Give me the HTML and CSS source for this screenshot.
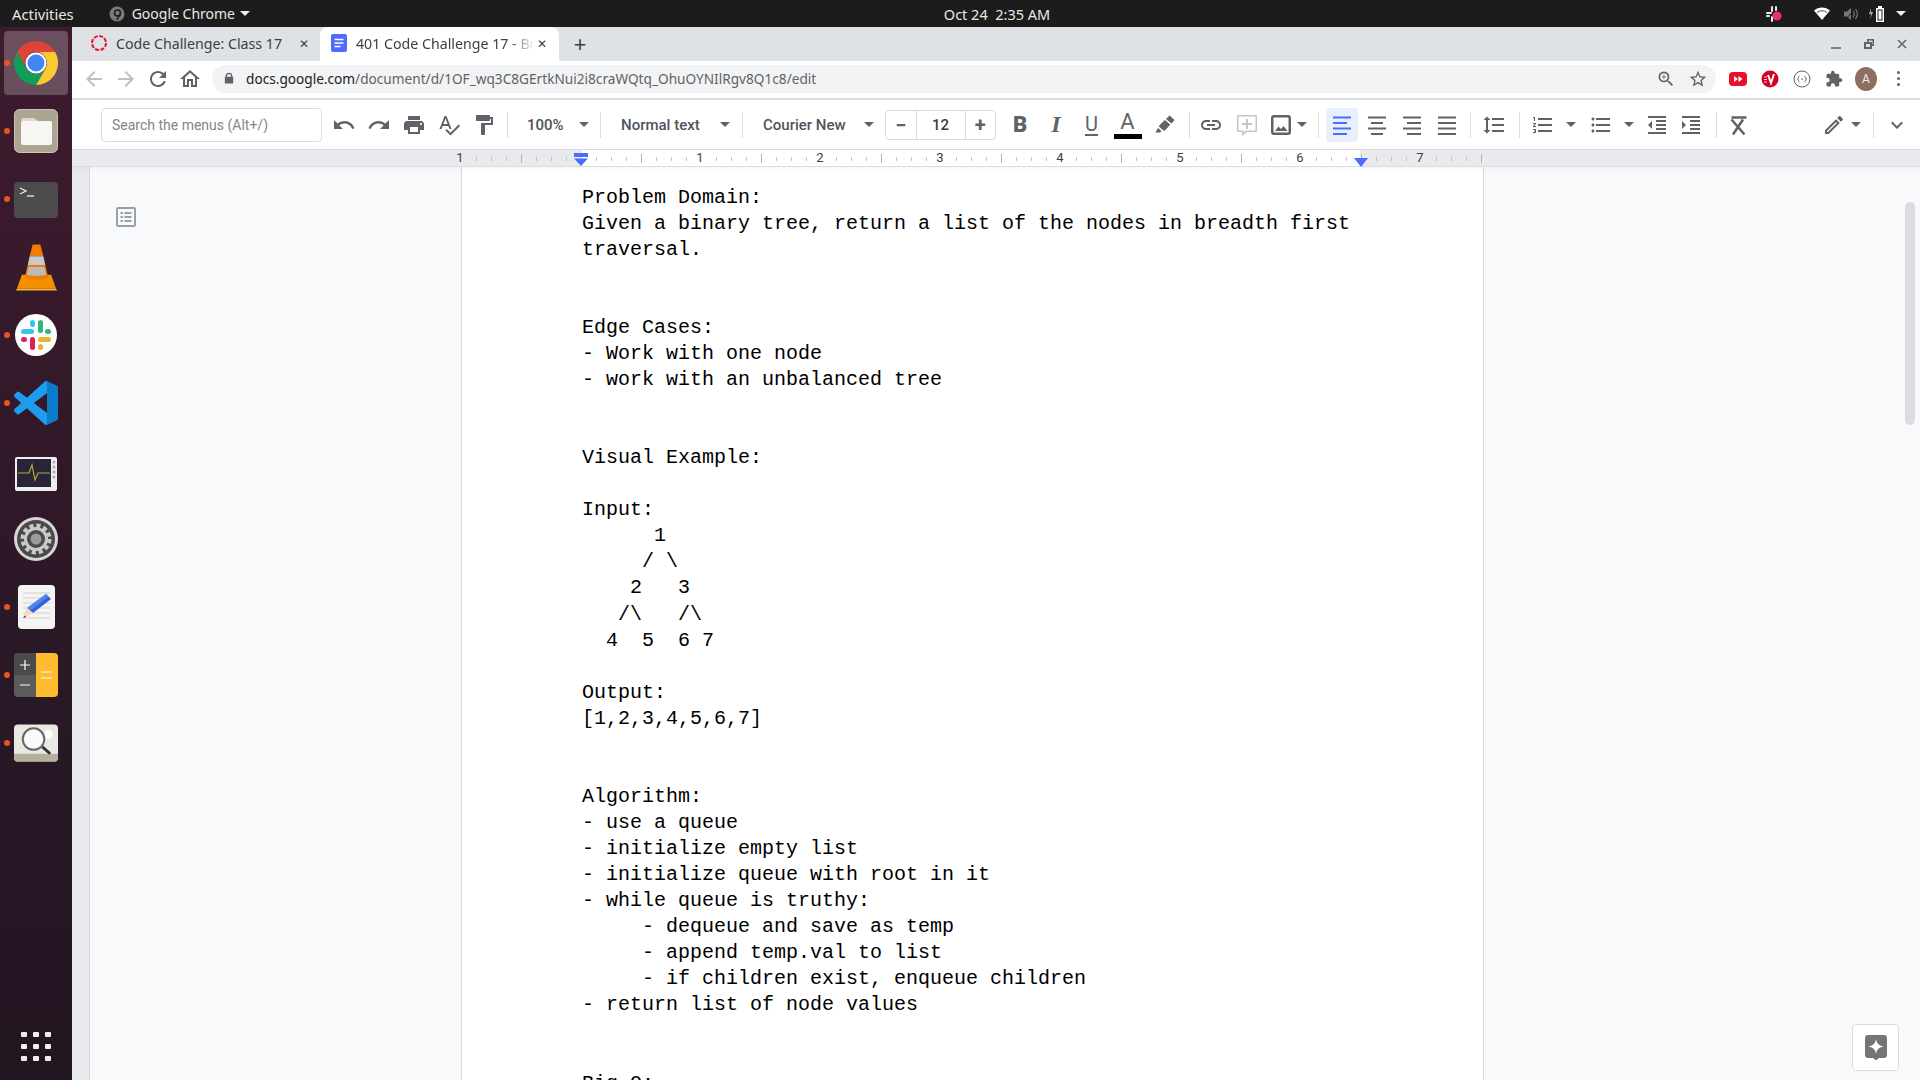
FILE: index.html
```html
<!DOCTYPE html>
<html lang="en">
<head>
  <meta charset="UTF-8">
  <title>401 Code Challenge 17</title>
  <link rel="stylesheet" href="styles.css">
</head>
<body>
  <!-- top bar -->
  <header class="topbar">
    <div class="topbar-left">
      <span class="activities">Activities</span>
      <span class="app-menu">
        <svg class="app-icon" viewBox="0 0 16 16"><circle cx="8" cy="8" r="7.5" fill="#7b7b7b"/><circle cx="8.5" cy="7" r="3" fill="none" stroke="#1c1c1c" stroke-width="1.6"/><path d="M11 8l-3 6" stroke="#1c1c1c" stroke-width="1.6"/></svg>
        Google Chrome <i class="caret white"></i>
      </span>
    </div>
    <div class="clock">Oct 24&nbsp;&nbsp;2:35 AM</div>
    <div class="tray">
      <svg class="tray-slack" viewBox="0 0 18 18"><g fill="#eee"><rect x="1" y="7" width="6" height="2" rx="1"/><rect x="6" y="1" width="2" height="6" rx="1"/><rect x="10" y="1" width="2" height="5" rx="1"/><rect x="6" y="11" width="2" height="6" rx="1"/><rect x="1" y="10" width="4" height="2" rx="1"/></g><circle cx="12" cy="11" r="4.6" fill="#e9306c"/></svg>
      <svg class="tray-wifi" viewBox="0 0 16 16"><path d="M0 4.5C4.500 .5 11.500 .5 16 4.500L8 14z" fill="#fff"/><path d="M3 6.500c3-2.200 7-2.200 10 0" fill="none" stroke="#1c1c1c" stroke-width=".8"/></svg>
      <svg class="tray-sound" viewBox="0 0 16 16"><path d="M1 5.500h3L8 2v12l-4-3.500H1z" fill="#777"/><path d="M10 4.500c1.500 2 1.500 5 0 7M12.500 3c2.200 3 2.200 7 0 10" fill="none" stroke="#777" stroke-width="1.200"/><path d="M2 14L13 2" stroke="#1c1c1c" stroke-width="1"/></svg>
      <svg class="tray-battery" viewBox="0 0 18 18"><path d="M3 3L1 9h2l-1 5 3-7H3z" fill="#aaa"/><path d="M10 1h4v2h2v14H8V3h2z" fill="#fff"/><rect x="9.500" y="4.500" width="5" height="11" fill="#1c1c1c"/><rect x="10.500" y="5.500" width="3" height="9" fill="#fff"/></svg>
      <i class="caret white"></i>
    </div>
  </header>

  <div class="desktop">
    <!-- dock -->
    <nav class="dock">
      <div class="dock-item active">
        <i class="run-dot"></i>
        <svg class="ic44" viewBox="2 2 44 44">
          <path d="M4.950 13A22 22 0 0 1 43.050 13H24A11 11 0 0 0 14.470 29.500z" fill="#db4437"/>
          <path d="M43.050 13A22 22 0 0 1 24 46L33.530 29.500A11 11 0 0 0 24 13z" fill="#fcc934"/>
          <path d="M24 46A22 22 0 0 1 4.950 13L14.470 29.500A11 11 0 0 0 33.530 29.500z" fill="#0f9d58"/>
          <circle cx="24" cy="24" r="10.500" fill="#fff"/><circle cx="24" cy="24" r="8.500" fill="#4285f4"/>
        </svg>
      </div>
      <div class="dock-item">
        <i class="run-dot"></i>
        <svg class="ic44" viewBox="0 0 44 44"><rect x=".5" y=".5" width="43" height="43" rx="5" fill="#aca591" stroke="#c8c3b4"/><path d="M7 12a3 3 0 0 1 3-3h10l4 3z" fill="#dcd8cc"/><rect x="7" y="12" width="31" height="24" rx="2" fill="#f8f6f2"/></svg>
      </div>
      <div class="dock-item">
        <i class="run-dot"></i>
        <svg class="ic44 term" viewBox="0 0 44 36"><rect width="44" height="36" rx="4" fill="#4c4c4c"/><path d="M6 6l6 3-6 3" fill="none" stroke="#eee" stroke-width="1.300"/><path d="M13 14h7" stroke="#eee" stroke-width="1.300"/></svg>
      </div>
      <div class="dock-item">
        <svg class="ic44 tall" viewBox="0 0 42 48">
          <path d="M6 32L1 46h40l-5-14z" fill="#f39000"/><path d="M1 46h40l1 2H0z" fill="#f8b133"/>
          <path d="M17 1h8l3 12H14z" fill="#f07d00"/><path d="M14 13h14l2 9H12z" fill="#c9c9c9"/><path d="M12 22h18l3 13c-4 3-20 3-24 0z" fill="#f07d00"/><path d="M13 24h16l2 8c-5 1.500-15 1.500-20 0z" fill="#bbb"/>
        </svg>
      </div>
      <div class="dock-item">
        <i class="run-dot"></i>
        <svg class="ic44" viewBox="0 0 44 44"><circle cx="22" cy="22" r="21" fill="#fff"/><g><rect x="7" y="16" width="13" height="5" rx="2.500" fill="#36c5f0"/><rect x="16" y="7" width="5" height="7" rx="2.500" fill="#36c5f0"/><rect x="24" y="7" width="5" height="13" rx="2.500" fill="#2eb67d"/><rect x="31" y="16" width="6" height="5" rx="2.500" fill="#2eb67d"/><rect x="24" y="24" width="13" height="5" rx="2.500" fill="#ecb22e"/><rect x="24" y="31" width="5" height="6" rx="2.500" fill="#ecb22e"/><rect x="16" y="24" width="5" height="13" rx="2.500" fill="#e01e5a"/><rect x="7" y="24" width="6" height="5" rx="2.500" fill="#e01e5a"/></g></svg>
      </div>
      <div class="dock-item">
        <i class="run-dot"></i>
        <svg class="ic44" viewBox="0 0 100 100"><path fill="#1f9cf0" d="M96.500 10.800L75.900.9a6.200 6.200 0 0 0-7.100 1.200L29.400 38 12.200 25a4.200 4.200 0 0 0-5.300.2l-5.500 5a4.200 4.200 0 0 0 0 6.200L16.300 50 1.400 63.600a4.200 4.200 0 0 0 0 6.200l5.500 5a4.200 4.200 0 0 0 5.300.2l17.200-13 39.400 35.900a6.200 6.200 0 0 0 7.100 1.200l20.600-9.900a6.200 6.200 0 0 0 3.500-5.600V16.400a6.200 6.200 0 0 0-3.500-5.600zM75 72.700L45.100 50 75 27.300z"/><path fill="#0a7ccb" d="M75.900.9l20.600 9.900a6.200 6.200 0 0 1 3.500 5.600v67.200a6.200 6.200 0 0 1-3.500 5.600l-20.600 9.900a6.200 6.200 0 0 1-4.900.3c1.200.6 4-1 4-3.400V4c0-2.400-2.800-4-4-3.400a6.200 6.200 0 0 1 4.900.3z"/></svg>
      </div>
      <div class="dock-item">
        <svg class="ic44 monitor" viewBox="0 0 42 34"><rect width="42" height="34" rx="2" fill="#eee"/><rect x="2" y="2" width="34" height="28" fill="#2a2438"/><path d="M3 16h11l3-8 3 15 3-7h12" fill="none" stroke="#b9a82e" stroke-width="1.200"/><g fill="#aaa"><circle cx="39" cy="5" r="1.500"/><circle cx="39" cy="10" r="1.500"/><circle cx="39" cy="15" r="1.500"/><circle cx="39" cy="20" r="1.500"/></g></svg>
      </div>
      <div class="dock-item">
        <svg class="ic44" viewBox="0 0 44 44"><circle cx="22" cy="22" r="22" fill="#d6d6d6"/><circle cx="22" cy="22" r="19" fill="#4a4a4a"/><circle cx="22" cy="22" r="13" fill="none" stroke="#c9c9c9" stroke-width="5" stroke-dasharray="4 2.800"/><circle cx="22" cy="22" r="10.500" fill="none" stroke="#c9c9c9" stroke-width="3"/><circle cx="22" cy="22" r="5.500" fill="#9a9a9a"/></svg>
      </div>
      <div class="dock-item">
        <i class="run-dot"></i>
        <svg class="ic44 narrow" viewBox="0 0 37 44"><rect width="37" height="44" rx="4" fill="#f4f4f4"/><g stroke="#cfcfcf"><path d="M5 8h27M5 13h27M5 18h27M5 23h27M5 28h27M5 33h27"/></g><path d="M28 9l5 5-18 14-6-5z" fill="#2f62d9"/><path d="M28 9l2.500 2.500-18 14-3-2.500z" fill="#4f86f0"/><path d="M9 23l6 5-10 5z" fill="#f8d8b8"/><path d="M7 30.500l-2 2.500 3-1z" fill="#333"/></svg>
      </div>
      <div class="dock-item">
        <i class="run-dot"></i>
        <svg class="ic44" viewBox="0 0 44 44"><path d="M4 0h18v44H4a4 4 0 0 1-4-4V4a4 4 0 0 1 4-4z" fill="#5b5b5b"/><path d="M4 0h18v22H0V4a4 4 0 0 1 4-4z" fill="#4a4a4a"/><path d="M22 0h18a4 4 0 0 1 4 4v36a4 4 0 0 1-4 4H22z" fill="#fdbb2d"/><path d="M6 12h10M11 7v10M6 32h10M27 19h11M27 25h11" stroke="#fff" stroke-width="1.200"/></svg>
      </div>
      <div class="dock-item">
        <i class="run-dot"></i>
        <svg class="ic44" viewBox="0 0 45 38"><rect width="45" height="38" rx="4" fill="#e9e8e1"/><path d="M0 30h45v4a4 4 0 0 1-4 4H4a4 4 0 0 1-4-4z" fill="#b5b09c"/><circle cx="35" cy="10" r="4.500" fill="#fff"/><circle cx="20" cy="15" r="11" fill="#fafafa" stroke="#666" stroke-width="2"/><path d="M29 23l8 7" stroke="#333" stroke-width="3"/></svg>
      </div>
      <div class="app-grid">
        <i></i><i></i><i></i><i></i><i></i><i></i><i></i><i></i><i></i>
      </div>
    </nav>

    <main class="browser">
      <!-- tabs -->
      <div class="tabstrip">
        <div class="tab">
          <svg class="favicon" viewBox="0 0 18 18"><circle cx="9" cy="9" r="7" fill="none" stroke="#e8112d" stroke-width="2" stroke-dasharray="4 1.500"/></svg>
          <span class="tab-title">Code Challenge: Class 17</span>
          <span class="tab-close">✕</span>
        </div>
        <div class="tab current">
          <svg class="favicon" viewBox="0 0 18 18"><rect x="1" y="0" width="16" height="18" rx="2" fill="#4d6bfe"/><path d="M4.500 5.500h9M4.500 9h9M4.500 12.500h6" stroke="#fff" stroke-width="1.600"/></svg>
          <span class="tab-title fade">401 Code Challenge 17 - Br</span>
          <span class="tab-close">✕</span>
        </div>
        <span class="new-tab">+</span>
        <div class="win-buttons">
          <svg viewBox="0 0 12 12"><path d="M1 10h10" stroke="#5f6368" stroke-width="1.500"/></svg>
          <svg viewBox="0 0 12 12"><path d="M4 1h7v7H9v3H1V4h3z" fill="#5f6368"/><path d="M3 6h4v3H3z" fill="#dee1e6"/><path d="M5.500 2.500h4v4H9V4H5.500z" fill="#dee1e6"/></svg>
          <svg viewBox="0 0 12 12"><path d="M2 2l8 8M10 2l-8 8" stroke="#5f6368" stroke-width="1.500"/></svg>
        </div>
      </div>

      <!-- address row -->
      <div class="addressbar">
        <svg class="nav-ic" viewBox="0 0 24 24"><path fill="#bdc1c6" d="M20 11H7.830l5.590-5.590L12 4l-8 8 8 8 1.410-1.410L7.830 13H20v-2z"/></svg>
        <svg class="nav-ic" viewBox="0 0 24 24"><path fill="#bdc1c6" d="M12 4l-1.410 1.410L16.170 11H4v2h12.170l-5.580 5.590L12 20l8-8z"/></svg>
        <svg class="nav-ic" viewBox="0 0 24 24"><path fill="#5f6368" d="M17.650 6.350C16.200 4.900 14.210 4 12 4c-4.420 0-7.990 3.580-7.990 8s3.570 8 7.990 8c3.730 0 6.840-2.550 7.730-6h-2.080c-.82 2.330-3.040 4-5.650 4-3.310 0-6-2.690-6-6s2.690-6 6-6c1.660 0 3.140.69 4.220 1.780L13 11h7V4l-2.350 2.350z"/></svg>
        <svg class="nav-ic" viewBox="0 0 24 24"><path fill="#5f6368" d="M12 5.690l5 4.500V18h-2v-6H9v6H7v-7.810l5-4.500M12 3L2 12h3v8h6v-6h2v6h6v-8h3L12 3z"/></svg>
        <div class="omnibox">
          <svg class="lock" viewBox="0 0 12 14"><path fill="#5f6368" d="M2 5V4a4 4 0 0 1 8 0v1h1v8H1V5zm1.500 0h5V4a2.500 2.500 0 0 0-5 0z"/></svg>
          <span class="url"><b>docs.google.com</b>/document/d/1OF_wq3C8GErtkNui2i8craWQtq_OhuOYNIlRgv8Q1c8/edit</span>
          <svg class="omni-ic" viewBox="0 0 24 24"><path fill="#5f6368" d="M15.500 14h-.79l-.28-.27A6.470 6.470 0 0 0 16 9.500 6.500 6.500 0 1 0 9.500 16c1.610 0 3.090-.59 4.230-1.570l.27.28v.79l5 4.990L20.490 19l-4.990-5zm-6 0C7.010 14 5 11.990 5 9.500S7.010 5 9.500 5 14 7.010 14 9.500 11.990 14 9.500 14z"/><path fill="#5f6368" d="M10 7H9v2H7v1h2v2h1v-2h2V9h-2z"/></svg>
          <svg class="omni-ic" viewBox="0 0 24 24"><path fill="#5f6368" d="M22 9.240l-7.190-.62L12 2 9.190 8.630 2 9.240l5.460 4.730L5.820 21 12 17.270 18.180 21l-1.630-7.030L22 9.240zM12 15.400l-3.760 2.270 1-4.280-3.320-2.880 4.380-.38L12 6.100l1.710 4.040 4.380.38-3.320 2.880 1 4.280L12 15.400z"/></svg>
        </div>
        <div class="ext-row">
          <svg class="ext" viewBox="0 0 18 18"><rect y="2" width="18" height="14" rx="4" fill="#e8112d"/><path d="M5 6l4 3-4 3zM9.500 6l4 3-4 3z" fill="#fff"/></svg>
          <svg class="ext" viewBox="0 0 18 18"><circle cx="9" cy="9" r="8.500" fill="#d5001f"/><path d="M7 5l3 8 3-9" fill="none" stroke="#fff" stroke-width="2"/><path d="M3 7h3M3 9.500h3M3 12h3" stroke="#fff" stroke-width=".8"/></svg>
          <svg class="ext" viewBox="0 0 18 18"><circle cx="9" cy="9" r="8" fill="#fff" stroke="#5f6368"/><path d="M6.500 6c-1.500 0-.5 3-2 3 1.500 0 .5 3 2 3M11.500 6c1.500 0 .5 3 2 3-1.500 0-.5 3-2 3M8 9h2" fill="none" stroke="#5f6368"/></svg>
          <svg class="ext" viewBox="0 0 24 24"><path fill="#5f6368" d="M20.500 11H19V7c0-1.100-.9-2-2-2h-4V3.500C13 2.120 11.880 1 10.500 1S8 2.120 8 3.500V5H4c-1.100 0-1.990.9-1.990 2v3.800H3.500c1.490 0 2.700 1.210 2.700 2.700s-1.210 2.700-2.700 2.700H2V20c0 1.100.9 2 2 2h3.800v-1.500c0-1.490 1.210-2.700 2.700-2.700 1.490 0 2.700 1.210 2.700 2.700V22H17c1.100 0 2-.9 2-2v-4h1.500c1.380 0 2.500-1.120 2.500-2.500S21.880 11 20.500 11z"/></svg>
          <span class="avatar">A</span>
          <span class="kebab"><i></i><i></i><i></i></span>
        </div>
      </div>

      <!-- docs toolbar -->
      <div class="toolbar">
        <div class="menu-search">Search the menus (Alt+/)</div>
        <div class="tb-group first">
          <span class="tb-btn"><svg viewBox="0 0 24 24"><path d="M12.500 8c-2.650 0-5.050.99-6.900 2.600L2 7v9h9l-3.620-3.620c1.390-1.160 3.160-1.880 5.120-1.880 3.540 0 6.550 2.310 7.600 5.500l2.370-.78C21.080 11.030 17.150 8 12.500 8z"/></svg></span>
          <span class="tb-btn"><svg viewBox="0 0 24 24"><path d="M18.400 10.600C16.550 8.990 14.150 8 11.500 8c-4.650 0-8.580 3.030-9.960 7.220L3.900 16c1.050-3.190 4.050-5.500 7.600-5.500 1.950 0 3.730.72 5.120 1.880L13 16h9V7l-3.600 3.600z"/></svg></span>
          <span class="tb-btn"><svg viewBox="0 0 24 24"><path d="M19 8H5c-1.660 0-3 1.340-3 3v6h4v4h12v-4h4v-6c0-1.660-1.340-3-3-3zm-3 11H8v-5h8v5zm3-7c-.55 0-1-.45-1-1s.45-1 1-1 1 .45 1 1-.45 1-1 1zm-1-9H6v4h12V3z"/></svg></span>
          <span class="tb-btn"><svg viewBox="0 0 24 24"><path d="M12.450 16h2.090L9.430 3H7.570L2.460 16h2.090l1.120-3h5.640l1.140 3zm-6.020-5L8.500 5.480 10.570 11H6.430zm15.160.59l-8.090 8.090L9.830 16l-1.410 1.410 5.090 5.090L23 13l-1.410-1.410z"/></svg></span>
          <span class="tb-btn"><svg viewBox="0 0 24 24"><path d="M18 4V3c0-.55-.45-1-1-1H5c-.55 0-1 .45-1 1v4c0 .55.45 1 1 1h12c.55 0 1-.45 1-1V6h1v4H9v11c0 .55.45 1 1 1h2c.55 0 1-.45 1-1v-9h8V4h-3z"/></svg></span>
        </div>
        <i class="tb-sep sep-zoom"></i>
        <div class="tb-select zoom-select"><span>100%</span><i class="caret"></i></div>
        <i class="tb-sep"></i>
        <div class="tb-select style-select"><span>Normal text</span><i class="caret"></i></div>
        <i class="tb-sep"></i>
        <div class="tb-select font-select"><span>Courier New</span><i class="caret"></i></div>
        <div class="stepper">
          <span class="step">−</span>
          <span class="step-value">12</span>
          <span class="step">+</span>
        </div>
        <div class="tb-group format">
          <span class="tb-btn glyph bold">B</span>
          <span class="tb-btn glyph italic">I</span>
          <span class="tb-btn glyph underline"><span>U</span></span>
          <span class="tb-btn glyph color"><span>A</span></span>
          <span class="tb-btn"><svg viewBox="0 0 24 24"><path d="M17.500 2.500l5 4.500-3 3.500-5.500-4.500zM12.800 7l5.500 4.500-5.300 6-1.200.3-4.800-4 .2-1.200zM6 15l3.500 3-1.500 1.500H3.500z"/></svg></span>
        </div>
        <i class="tb-sep sep-insert"></i>
        <div class="tb-group insert">
          <span class="tb-btn"><svg viewBox="0 0 24 24"><path d="M3.900 12c0-1.710 1.390-3.100 3.100-3.100h4V7H7c-2.760 0-5 2.240-5 5s2.240 5 5 5h4v-1.900H7c-1.710 0-3.100-1.390-3.100-3.100zM8 13h8v-2H8v2zm9-6h-4v1.900h4c1.710 0 3.100 1.390 3.100 3.100s-1.390 3.100-3.100 3.100h-4V17h4c2.760 0 5-2.240 5-5s-2.240-5-5-5z"/></svg></span>
          <span class="tb-btn"><svg viewBox="0 0 24 24"><path fill="#c4c6c9" d="M3 2h18a1 1 0 0 1 1 1v15a1 1 0 0 1-1 1h-9l-5 4v-4H3a1 1 0 0 1-1-1V3a1 1 0 0 1 1-1zm.500 1.500v14h5v2l2.500-2h9.500v-14zM11 6h2v4h4v2h-4v4h-2v-4H7v-2h4z"/></svg></span>
          <span class="tb-btn img-btn"><svg viewBox="0 0 24 24"><path d="M5 2h14a3 3 0 0 1 3 3v14a3 3 0 0 1-3 3H5a3 3 0 0 1-3-3V5a3 3 0 0 1 3-3zm0 2.500a.5.5 0 0 0-.5.5v14a.5.5 0 0 0 .5.5h14a.5.5 0 0 0 .5-.5V5a.5.5 0 0 0-.5-.5zM6 18l3.500-4.500 2.500 2.500 2.500-3 4 5z"/></svg><i class="caret"></i></span>
        </div>
        <i class="tb-sep sep-align"></i>
        <div class="tb-group align">
          <span class="tb-btn on"><svg viewBox="0 0 24 24"><path d="M3 3.500h18v2H3zM3 9h14v2H3zM3 14.500h18v2H3zM3 20h14v2H3z"/></svg></span>
          <span class="tb-btn"><svg viewBox="0 0 24 24"><path d="M3 3.500h18v2H3zM6 9h12v2H6zM3 14.500h18v2H3zM6 20h12v2H6z"/></svg></span>
          <span class="tb-btn"><svg viewBox="0 0 24 24"><path d="M3 3.500h18v2H3zM7 9h14v2H7zM3 14.500h18v2H3zM7 20h14v2H7z"/></svg></span>
          <span class="tb-btn"><svg viewBox="0 0 24 24"><path d="M3 3.500h18v2H3zM3 9h18v2H3zM3 14.500h18v2H3zM3 20h18v2H3z"/></svg></span>
        </div>
        <i class="tb-sep sep-lines"></i>
        <span class="tb-btn spacing"><svg viewBox="0 0 24 24"><path d="M6 7h2.500L5 3.500 1.500 7H4v10H1.500L5 20.500 8.500 17H6V7zm4-2v2h12V5H10zm0 14h12v-2H10v2zm0-6h12v-2H10v2z"/></svg></span>
        <i class="tb-sep sep-list"></i>
        <div class="tb-group lists">
          <span class="tb-btn list-btn num"><svg viewBox="0 0 24 24"><path d="M2 17h2v.5H3v1h1v.5H2v1h3v-4H2v1zm1-9h1V4H2v1h1v3zm-1 3h1.800L2 13.100v.9h3v-1H3.200L5 10.900V10H2v1zm5-6v2h14V5H7zm0 14h14v-2H7v2zm0-6h14v-2H7v2z"/></svg><i class="caret"></i></span>
          <span class="tb-btn list-btn"><svg viewBox="0 0 24 24"><path d="M4 10.500c-.83 0-1.500.67-1.500 1.500s.67 1.500 1.500 1.500 1.500-.67 1.500-1.500-.67-1.500-1.500-1.500zm0-6c-.83 0-1.500.67-1.500 1.500S3.170 7.500 4 7.500 5.500 6.830 5.500 6 4.830 4.500 4 4.500zm0 12c-.83 0-1.500.68-1.500 1.500s.68 1.500 1.500 1.500 1.500-.68 1.500-1.500-.67-1.500-1.500-1.500zM7 19h14v-2H7v2zm0-6h14v-2H7v2zm0-8v2h14V5H7z"/></svg><i class="caret"></i></span>
          <span class="tb-btn indent"><svg viewBox="0 0 24 24"><path d="M11 17h10v-2H11v2zm-8-5l4 4V8l-4 4zm0 9h18v-2H3v2zM3 3v2h18V3H3zm8 6h10V7H11v2zm0 4h10v-2H11v2z"/></svg></span>
          <span class="tb-btn indent"><svg viewBox="0 0 24 24"><path d="M3 21h18v-2H3v2zM3 8v8l4-4-4-4zm8 9h10v-2H11v2zM3 3v2h18V3H3zm8 6h10V7H11v2zm0 4h10v-2H11v2z"/></svg></span>
        </div>
        <i class="tb-sep sep-clear"></i>
        <span class="tb-btn clear"><svg viewBox="0 0 24 24"><path d="M4.500 4.500h15M4.500 6.500l13 15M16 6.500L6 21.500" fill="none" stroke="#5f6368" stroke-width="2.500"/></svg></span>
        <div class="tb-right">
          <span class="tb-btn list-btn pencil"><svg viewBox="0 0 24 24"><path d="M14.060 9.020l.92.92L5.920 19H5v-.92l9.060-9.060M17.660 3c-.25 0-.51.1-.7.29l-1.830 1.830 3.750 3.750 1.830-1.830c.39-.39.39-1.020 0-1.410l-2.340-2.340c-.2-.2-.45-.29-.71-.29zm-3.600 3.190L3 17.250V21h3.750L17.810 9.940l-3.750-3.750z"/></svg><i class="caret"></i></span>
          <i class="tb-sep"></i>
          <span class="tb-btn chevron"><svg viewBox="0 0 24 24"><path d="M7.410 8.590L12 13.170l4.590-4.580L18 10l-6 6-6-6z"/></svg></span>
        </div>
      </div>

      <!-- ruler -->
      <div class="ruler">
        <div class="ruler-page">
          <div class="ruler-text"></div>
        </div>
        <div class="ruler-nums">
          <span><b class="off">1</b></span><span></span><span><b>1</b></span><span><b>2</b></span><span><b>3</b></span><span><b>4</b></span><span><b>5</b></span><span><b>6</b></span><span><b class="off">7</b></span>
        </div>
        <svg class="indent-left" viewBox="0 0 16 13"><path d="M1 0h14v4H1z" fill="#4d6bfe"/><path d="M1 5.500h14L8 13z" fill="#4d6bfe"/></svg>
        <svg class="indent-right" viewBox="0 0 16 9"><path d="M1 0h14L8 9z" fill="#4d6bfe"/></svg>
      </div>

      <!-- document -->
      <div class="doc-area">
        <div class="doc-gutter"></div>
        <svg class="outline-ic" viewBox="0 0 24 24"><path fill="#9aa0a6" d="M4 2h16a2 2 0 0 1 2 2v16a2 2 0 0 1-2 2H4a2 2 0 0 1-2-2V4a2 2 0 0 1 2-2zm0 2v16h16V4zm2.500 3H9v2H6.500zm4 0h7v2h-7zm-4 4H9v2H6.500zm4 0h7v2h-7zm-4 4H9v2H6.500zm4 0h7v2h-7z"/></svg>
        <article class="page"><pre class="page-text">Problem Domain:
Given a binary tree, return a list of the nodes in breadth first
traversal.


Edge Cases:
- Work with one node
- work with an unbalanced tree


Visual Example:

Input:
      1
     / \
    2   3
   /\   /\
  4  5  6 7

Output:
[1,2,3,4,5,6,7]


Algorithm:
- use a queue
- initialize empty list
- initialize queue with root in it
- while queue is truthy:
     - dequeue and save as temp
     - append temp.val to list
     - if children exist, enqueue children
- return list of node values


Big O:</pre></article>
        <div class="scroll-thumb"></div>
        <div class="explore-btn">
          <svg viewBox="0 0 22 25"><path fill="#757575" d="M3 0h16a3 3 0 0 1 3 3v17a3 3 0 0 1-3 3h-5l-3 2.500L8 23H3a3 3 0 0 1-3-3V3a3 3 0 0 1 3-3z"/><path fill="#fff" d="M11 4c.8 4.500 2.500 6.500 7.500 7.500-5 1-6.700 3-7.500 7.500-.8-4.500-2.500-6.500-7.500-7.500 5-1 6.700-3 7.500-7.500z"/></svg>
        </div>
      </div>
    </main>
  </div>
</body>
</html>
```

FILE: styles.css
```css
* {
  box-sizing: border-box;
}
html, body {
  margin: 0;
  height: 1080px;
  overflow: hidden;
}
body {
  font-family: Roboto, sans-serif;
  display: flex;
  flex-direction: column;
}
i {
  display: block;
}
.caret {
  width: 0;
  height: 0;
  border-left: 5px solid transparent;
  border-right: 5px solid transparent;
  border-top: 5px solid #5f6368;
  flex-shrink: 0;
}
.caret.white {
  border-top-color: #eee;
}

/* top bar */
.topbar {
  height: 27px;
  flex-shrink: 0;
  background: #1c1c1c;
  color: #e8e8e8;
  font-family: "Noto Sans", sans-serif;
  font-size: 14px;
  display: flex;
  align-items: center;
  justify-content: space-between;
  padding: 0 14px 0 12px;
}
.topbar-left {
  display: flex;
  align-items: center;
  gap: 35px;
}
.activities {
  font-size: 14.8px;
}
.app-menu {
  display: flex;
  align-items: center;
  gap: 5px;
}
.app-icon {
  width: 16px;
  height: 16px;
  margin-right: 2px;
}
.clock {
  width: 130px;
  text-align: center;
  margin-left: -21px;
  font-size: 14.5px;
}
.tray {
  display: flex;
  align-items: center;
}
.tray svg {
  display: block;
}
.tray-slack {
  width: 18px;
  height: 18px;
  margin-right: 31px;
}
.tray-wifi {
  width: 16px;
  height: 16px;
  margin-right: 13.5px;
}
.tray-sound {
  width: 16px;
  height: 16px;
  margin-right: 9px;
}
.tray-battery {
  width: 18px;
  height: 18px;
  margin-right: 9.5px;
}

.desktop {
  flex: 1;
  display: flex;
  min-height: 0;
}

/* dock */
.dock {
  width: 72px;
  flex-shrink: 0;
  background: linear-gradient(180deg, #3f1b2f 0%, #2a1826 60%, #211520 100%);
  display: flex;
  flex-direction: column;
  padding-top: 2px;
}
.dock-item {
  height: 68px;
  flex-shrink: 0;
  display: flex;
  align-items: center;
  justify-content: center;
  position: relative;
}
.dock-item.active::before {
  content: "";
  position: absolute;
  left: 4px;
  right: 4px;
  top: 2px;
  bottom: 2px;
  background: rgba(255,255,255,0.23);
  border-radius: 4px;
}
.run-dot {
  position: absolute;
  left: 4px;
  top: 31px;
  width: 6px;
  height: 6px;
  border-radius: 50%;
  background: #e95420;
}
.ic44 {
  width: 44px;
  height: 44px;
  position: relative;
}
.ic44.tall {
  width: 41px;
  height: 48px;
}
.ic44.monitor {
  width: 42px;
  height: 34px;
  margin-top: 6px;
}
.ic44.narrow {
  width: 37px;
  height: 44px;
}
.ic44.term {
  height: 36px;
  margin-top: 2px;
}
.app-grid {
  margin-top: auto;
  margin-bottom: 19px;
  align-self: center;
  display: grid;
  grid-template-columns: repeat(3, 6px);
  grid-auto-rows: 5px;
  column-gap: 6px;
  row-gap: 7px;
}
.app-grid i {
  background: #eee;
  border-radius: 1px;
}

/* browser */
.browser {
  flex: 1;
  min-width: 0;
  display: flex;
  flex-direction: column;
}
.tabstrip {
  height: 34px;
  flex-shrink: 0;
  background: #dee1e6;
  display: flex;
  align-items: flex-end;
  padding-left: 6px;
  font-family: "Noto Sans", sans-serif;
  font-size: 14.2px;
  color: #3c4043;
}
.tab {
  width: 242px;
  height: 34px;
  display: flex;
  align-items: center;
  padding: 0 9px 2px 12px;
}
.tab.current {
  width: 239px;
  background: #fff;
  border-radius: 8px 8px 0 0;
  padding: 0 10px 2px 10px;
}
.favicon {
  width: 18px;
  height: 18px;
  flex-shrink: 0;
  margin-right: 8px;
}
.tab-title {
  flex: 1;
  white-space: nowrap;
  overflow: hidden;
}
.tab-title.fade {
  -webkit-mask-image: linear-gradient(90deg, #000 85%, transparent 100%);
  mask-image: linear-gradient(90deg, #000 85%, transparent 100%);
}
.tab-close {
  width: 14px;
  font-size: 12px;
  text-align: center;
  color: #3c4043;
}
.new-tab {
  width: 42px;
  height: 34px;
  font-size: 22px;
  text-align: center;
  line-height: 32px;
  color: #3c4043;
}
.win-buttons {
  margin-left: auto;
  height: 34px;
  display: flex;
  align-items: center;
  gap: 21px;
  padding-right: 12px;
}
.win-buttons svg {
  width: 12px;
  height: 12px;
}

/* address row */
.addressbar {
  height: 39px;
  flex-shrink: 0;
  background: #fff;
  border-bottom: 2px solid #dadce0;
  display: flex;
  align-items: center;
  padding: 0 0 2px 10px;
}
.nav-ic {
  width: 24px;
  height: 24px;
  margin-right: 8px;
  flex-shrink: 0;
}
.omnibox {
  margin-left: 2px;
  width: 1504px;
  height: 28px;
  flex-shrink: 0;
  border-radius: 14px;
  background: #f1f3f4;
  display: flex;
  align-items: center;
  padding: 0 8px 0 12px;
}
.lock {
  width: 10px;
  height: 13px;
  margin-right: 12px;
}
.url {
  flex: 1;
  font-family: "Noto Sans", sans-serif;
  font-size: 13.65px;
  color: #5f6368;
  white-space: nowrap;
}
.url b {
  font-weight: 400;
  color: #202124;
}
.omni-ic {
  width: 20px;
  height: 20px;
  margin-left: 12px;
}
.ext-row {
  flex: 1;
  display: flex;
  align-items: center;
  padding-left: 13px;
}
.ext {
  width: 18px;
  height: 18px;
  margin-right: 14px;
}
.avatar {
  width: 22px;
  height: 24px;
  margin: 0 11px 0 -2px;
  border-radius: 50%;
  background: #8d6e63;
  color: #eee;
  font-size: 12px;
  text-align: center;
  line-height: 24px;
}
.kebab {
  display: flex;
  flex-direction: column;
  gap: 3px;
  margin-left: 9px;
}
.kebab i {
  width: 3px;
  height: 3px;
  border-radius: 50%;
  background: #5f6368;
}

/* toolbar */
.toolbar {
  height: 50px;
  flex-shrink: 0;
  background: #fff;
  border-bottom: 1px solid #dadce0;
  display: flex;
  align-items: center;
  padding-left: 29px;
  color: #444746;
  font-size: 14px;
}
.menu-search {
  width: 221px;
  height: 34px;
  flex-shrink: 0;
  border: 1px solid #dadce0;
  border-radius: 4px;
  padding-left: 10px;
  line-height: 32px;
  color: #80868b;
  font-size: 14px;
}
.tb-group {
  display: flex;
  align-items: center;
}
.tb-group.first {
  margin-left: 4px;
}
.tb-btn {
  width: 32px;
  height: 34px;
  margin: 0 1.5px;
  display: flex;
  align-items: center;
  justify-content: center;
  flex-shrink: 0;
  border-radius: 3px;
}
.tb-btn svg {
  width: 24px;
  height: 24px;
  fill: #5f6368;
  flex-shrink: 0;
}
.tb-sep {
  width: 1px;
  height: 26px;
  flex-shrink: 0;
  background: #dadce0;
}
.sep-zoom {
  margin-left: 6px;
}
.tb-select {
  height: 34px;
  flex-shrink: 0;
  display: flex;
  align-items: center;
  justify-content: space-between;
  font-size: 15px;
  font-weight: 500;
  color: #50545a;
}
.zoom-select {
  width: 92px;
  padding: 0 11px 0 19px;
}
.style-select {
  width: 141px;
  padding: 0 12px 0 20px;
}
.font-select {
  width: 136.5px;
  padding: 0 6px 0 20px;
}
.stepper {
  margin-left: 5.5px;
  width: 111px;
  height: 30px;
  flex-shrink: 0;
  border: 1px solid #dadce0;
  border-radius: 4px;
  display: flex;
  align-items: center;
  text-align: center;
  color: #5f6368;
}
.step {
  flex: 1;
  font-size: 20px;
  font-weight: 700;
  line-height: 28px;
}
.step-value {
  width: 50px;
  line-height: 28px;
  border-left: 1px solid #dadce0;
  border-right: 1px solid #dadce0;
  font-size: 15px;
  font-weight: 500;
  color: #3c4043;
}
.format {
  margin-left: 6px;
}
.format .tb-btn {
  margin: 0 2px;
}
.glyph {
  font-size: 22px;
  color: #5f6368;
}
.bold {
  font-weight: 900;
}
.italic {
  font-family: "Liberation Serif", serif;
  font-style: italic;
  font-weight: 700;
  font-size: 24px;
}
.underline {
  padding-right: 1px;
}
.underline span {
  border-bottom: 2px solid #5f6368;
  line-height: 20px;
  font-size: 20px;
  font-weight: 400;
}
.color {
  padding-right: 1px;
}
.color span {
  width: 28px;
  text-align: center;
  border-bottom: 5px solid #000;
  line-height: 24px;
  font-weight: 400;
}
.sep-insert {
  margin-left: 7px;
}
.insert {
  margin-left: 3px;
}
.insert .tb-btn {
  margin: 0 2px;
}
.insert .img-btn {
  width: 47px;
  padding-left: 4px;
  justify-content: flex-start;
  margin: 0;
}
.img-btn .caret {
  margin-left: 4px;
}
.sep-align {
  margin-left: 6px;
}
.align {
  margin-left: 5px;
}
.tb-btn.on {
  background: #e8f0fe;
}
.tb-btn.on svg {
  fill: #4d6bfe;
}
.sep-lines {
  margin-left: 6px;
}
.spacing {
  margin-left: 7px;
}
.sep-list {
  margin-left: 7.5px;
}
.lists {
  margin-left: 11px;
}
.list-btn {
  width: 47px;
  margin: 0 4px 0 0;
  justify-content: flex-start;
  gap: 11px;
}
.list-btn.num {
  width: 53.5px;
}
.indent {
  margin: 0 1px;
}
.sep-clear {
  margin-left: 8px;
}
.clear {
  margin-left: 6.5px;
}
.tb-right {
  margin-left: auto;
  display: flex;
  align-items: center;
  padding-right: 6px;
}
.tb-right .pencil {
  margin: 0 5px 0 0;
  width: 46px;
  gap: 5px;
}
.chevron {
  margin-left: 7px;
}

/* ruler */
.ruler {
  height: 17px;
  flex-shrink: 0;
  background: #e8eaed;
  border-bottom: 1px solid #dadce0;
  position: relative;
  z-index: 1;
  box-shadow: 0 2px 5px rgba(60,64,67,0.05);
}
.ruler-page {
  position: absolute;
  left: 390px;
  width: 1021px;
  top: 0;
  bottom: 0;
  background-image:
    repeating-linear-gradient(90deg, #b0b3b8 0 1px, transparent 1px 120px),
    repeating-linear-gradient(90deg, #c4c6c9 0 1px, transparent 1px 15px);
  background-size: 100% 9px, 100% 4px;
  background-position: 59px 4px, 14px 7px;
  background-repeat: no-repeat;
}
.ruler-text {
  position: absolute;
  left: 120px;
  width: 778px;
  top: 0;
  bottom: 0;
  background-color: #fff;
  background-image:
    repeating-linear-gradient(90deg, #b0b3b8 0 1px, transparent 1px 120px),
    repeating-linear-gradient(90deg, #c4c6c9 0 1px, transparent 1px 15px);
  background-size: 100% 9px, 100% 4px;
  background-position: 59px 4px, 14px 7px;
  background-repeat: no-repeat;
}
.ruler-nums {
  position: relative;
  padding-left: 328px;
  display: flex;
  font-size: 13px;
  line-height: 16px;
  color: #3c4043;
}
.ruler-nums span {
  width: 120px;
  flex-shrink: 0;
  text-align: center;
}
.ruler-nums b {
  display: inline-block;
  padding: 0 3px;
  font-weight: 400;
  background: #fff;
}
.ruler-nums b.off {
  background: #e8eaed;
}
.indent-left {
  position: absolute;
  left: 501px;
  top: 3px;
  width: 16px;
  height: 13px;
}
.indent-right {
  position: absolute;
  left: 1281px;
  top: 8px;
  width: 16px;
  height: 9px;
}

/* document */
.doc-area {
  flex: 1;
  min-height: 0;
  background: #f8f9fa;
  position: relative;
  overflow: hidden;
}
.doc-gutter {
  position: absolute;
  left: 0;
  top: 0;
  bottom: 0;
  width: 18px;
  background: #e8eaed;
  border-right: 1px solid #dadce0;
}
.outline-ic {
  position: absolute;
  left: 42px;
  top: 38px;
  width: 24px;
  height: 24px;
}
.page {
  position: absolute;
  left: 390px;
  top: 0;
  width: 1021px;
  height: 920px;
  background: #fff;
  box-shadow: 0 0 2px rgba(60,64,67,0.45);
  padding: 17.5px 0 0 120px;
}
.page-text {
  margin: 0;
  font-family: "Liberation Mono", "Courier New", monospace;
  font-size: 20px;
  line-height: 26.06px;
  color: #000;
}
.scroll-thumb {
  position: absolute;
  left: 1833px;
  top: 35px;
  width: 10px;
  height: 223px;
  border-radius: 5px;
  background: #dadce0;
}
.explore-btn {
  position: absolute;
  left: 1780px;
  top: 857px;
  width: 47px;
  height: 47px;
  background: #fff;
  border: 1px solid #dadce0;
  border-radius: 4px;
  display: flex;
  align-items: center;
  justify-content: center;
}
.explore-btn svg {
  width: 22px;
  height: 25px;
}
```
